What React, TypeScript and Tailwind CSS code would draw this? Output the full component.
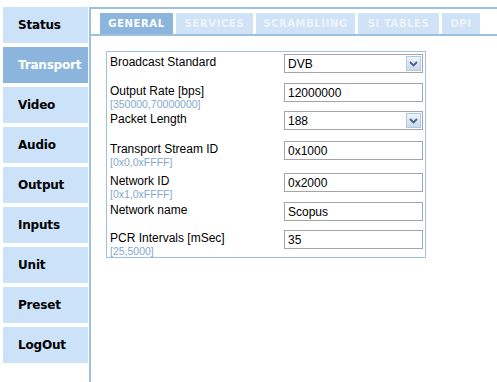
import React from 'react';

const menu = ['Status', 'Transport', 'Video', 'Audio', 'Output', 'Inputs', 'Unit', 'Preset', 'LogOut'];
const tabs = [
  { t: 'GENERAL', w: 'w-[73px]' },
  { t: 'SERVICES', w: 'w-[77px]' },
  { t: 'SCRAMBLIING', w: 'w-[99px]' },
  { t: 'SI TABLES', w: 'w-[81px]' },
  { t: 'DPI', w: 'w-[38px]' },
];

type Row = {
  label: string;
  range?: string;
  value: string;
  select?: boolean;
  h: string;
};

const rows: Row[] = [
  { label: 'Broadcast Standard', value: 'DVB', select: true, h: 'h-[29px]' },
  { label: 'Output Rate [bps]', range: '[350000,70000000]', value: '12000000', h: 'h-[28px]' },
  { label: 'Packet Length', value: '188', select: true, h: 'h-[30px]' },
  { label: 'Transport Stream ID', range: '[0x0,0xFFFF]', value: '0x1000', h: 'h-[32px]' },
  { label: 'Network ID', range: '[0x1,0xFFFF]', value: '0x2000', h: 'h-[29px]' },
  { label: 'Network name', value: 'Scopus', h: 'h-[28px]' },
  { label: 'PCR Intervals [mSec]', range: '[25,5000]', value: '35', h: 'h-[26px]' },
];

function Field({ row }: { row: Row }) {
  return (
    <div className="relative h-[19px] w-[139px] border border-[#a5a5a5] bg-white flex items-center">
      <span className="pl-[3px] text-[12px] text-black leading-none">{row.value}</span>
      {row.select && (
        <div className="absolute right-[1px] top-[1px] bottom-[1px] w-[15px] border border-[#b5c8dc] bg-gradient-to-b from-[#eef4fb] to-[#c9daee] flex items-center justify-center">
          <svg width="9" height="6" viewBox="0 0 9 6">
            <path d="M1 1 L4.5 4.5 L8 1" fill="none" stroke="#4d6185" strokeWidth="1.8" />
          </svg>
        </div>
      )}
    </div>
  );
}

export default function App() {
  return (
    <div className="w-[497px] h-[382px] bg-white flex overflow-hidden" style={{ fontFamily: '"Liberation Sans", Arial, sans-serif' }}>
      {/* sidebar */}
      <div className="w-[89px] shrink-0 pl-[3px] pt-[7px] flex flex-col gap-[4px]" style={{ fontFamily: '"DejaVu Sans", Verdana, sans-serif' }}>
        {menu.map(m => (
          <div
            key={m}
            className={`h-[36px] w-[85px] flex items-center pl-[15px] text-[12px] tracking-[-0.2px] font-bold whitespace-nowrap ${
              m === 'Transport' ? 'bg-[#8cb5dd] text-white' : 'bg-[#cce2f8] text-black'
            }`}
          >
            {m}
          </div>
        ))}
      </div>

      {/* main panel */}
      <div className="flex-1 mt-[7px] border-l-2 border-t-2 border-[#9fc1e0] flex flex-col">
        <div className="h-[27px] flex items-end pl-[9px] gap-[3px] border-b-2 border-[#9fc1e0]" style={{ fontFamily: '"DejaVu Sans", Verdana, sans-serif' }}>
          {tabs.map((t, i) => (
            <div
              key={t.t}
              className={`${t.w} h-[21px] flex items-center justify-center whitespace-nowrap text-[10px] font-bold tracking-[0.6px] ${
                i === 0 ? 'bg-[#8cb5dd] text-white' : 'bg-[#d0e2f5] text-[#eef5fc]'
              }`}
            >
              {t.t}
            </div>
          ))}
        </div>

        <div className="ml-[15px] mt-[15px] w-[320px] h-[207px] border border-[#9fc1e0] pt-[2px] pl-[3px] pr-[2px]">
          {rows.map(r => (
            <div key={r.label} className={`${r.h} flex justify-between`}>
              <div className="flex flex-col pt-[1px]">
                <span className="text-[12px] leading-[14px] text-black">{r.label}</span>
                {r.range && <span className="text-[10.5px] leading-[12px] text-[#7fa8cf]">{r.range}</span>}
              </div>
              <Field row={r} />
            </div>
          ))}
        </div>
      </div>
    </div>
  );
}
